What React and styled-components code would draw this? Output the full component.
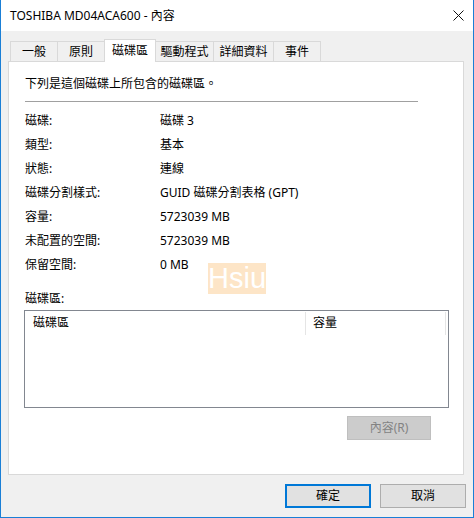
import React from "react";
import styled, { createGlobalStyle } from "styled-components";

const Global = createGlobalStyle`
  html, body { margin: 0; padding: 0; background: #ffffff; }
  body {
    font-family: "Noto Sans", "Noto Sans CJK TC", sans-serif;
    font-size: 12px;
    color: #000;
  }
  * { box-sizing: border-box; }
`;

const Window = styled.div`
  width: 474px;
  height: 518px;
  border: 1px solid #1a7fd6;
  border-top: none;
  display: flex;
  flex-direction: column;
  background: #f0f0f0;
`;

const TitleBar = styled.div`
  height: 31px;
  flex: none;
  background: #ffffff;
  display: flex;
  align-items: center;
  justify-content: space-between;
  padding: 0 9px 0 9px;
  font-size: 12px;
  line-height: 16px;
`;

const TitleText = styled.span`
  white-space: nowrap;
`;

const Body = styled.div`
  flex: 1;
  display: flex;
  flex-direction: column;
  padding: 8px 0 0 7px;
`;

const Tabs = styled.div`
  display: flex;
  align-items: flex-end;
  height: 22px;
  margin-left: 2px;
  position: relative;
  z-index: 1;
`;

const Tab = styled.div`
  width: ${(p) => p.$w}px;
  height: ${(p) => (p.$selected ? 23 : 20)}px;
  margin-bottom: ${(p) => (p.$selected ? -1 : 0)}px;
  margin-right: -1px;
  border: 1px solid #d9d9d9;
  border-bottom: none;
  background: ${(p) => (p.$selected ? "#ffffff" : "#f0f0f0")};
  position: relative;
  z-index: ${(p) => (p.$selected ? 2 : 1)};
  display: flex;
  align-items: center;
  justify-content: center;
  font-size: 12px;
  line-height: 16px;
  padding-top: ${(p) => (p.$selected ? 0 : 1)}px;
  white-space: nowrap;
`;

const Panel = styled.div`
  width: 456px;
  height: 414px;
  background: #ffffff;
  border: 1px solid #d9d9d9;
  padding: 14px 0 0 16px;
  display: flex;
  flex-direction: column;
`;

const Intro = styled.div`
  line-height: 16px;
`;

const Separator = styled.div`
  width: 393px;
  height: 1px;
  background: #a0a0a0;
  margin-top: 9px;
`;

const InfoGrid = styled.div`
  display: grid;
  grid-template-columns: 135px 1fr;
  grid-auto-rows: 24px;
  align-items: center;
  margin-top: 7px;
  line-height: 16px;
`;

const Label = styled.div`
  line-height: 16px;
  margin-top: 14px;
`;

const ListBox = styled.div`
  margin-top: 3px;
  margin-left: -1px;
  width: 425px;
  height: 98px;
  border: 1px solid #828790;
  background: #ffffff;
`;

const ListHeader = styled.div`
  display: flex;
  height: 24px;
`;

const HeaderCell = styled.div`
  width: ${(p) => p.$w}px;
  padding-left: ${(p) => p.$pad}px;
  display: flex;
  align-items: center;
  line-height: 16px;
  padding-bottom: 1px;
`;

const HeaderDivider = styled.div`
  width: 1px;
  margin-top: 1px;
  height: 23px;
  background: #e5e5e5;
`;

const ButtonRow = styled.div`
  display: flex;
  justify-content: flex-end;
  padding-right: ${(p) => p.$right}px;
  margin-top: ${(p) => p.$top}px;
  gap: 9px;
`;

const Button = styled.div`
  width: ${(p) => p.$w}px;
  height: 24px;
  display: flex;
  align-items: center;
  justify-content: center;
  font-size: 12px;
  line-height: 16px;
  background: ${(p) => (p.$disabled ? "#cccccc" : "#e1e1e1")};
  color: ${(p) => (p.$disabled ? "#838383" : "#000")};
  border: ${(p) =>
    p.$default
      ? "2px solid #0078d7"
      : p.$disabled
      ? "1px solid #bfbfbf"
      : "1px solid #adadad"};
`;

const Watermark = styled.div`
  position: absolute;
  left: 208px;
  top: 263px;
  width: 58px;
  height: 31px;
  background: #fde5c7;
  color: #ffffff;
  font-family: "Liberation Sans", Arial, sans-serif;
  font-size: 29px;
  line-height: 31px;
  text-align: center;
`;

const Root = styled.div`
  position: relative;
  width: 474px;
  height: 518px;
`;

const CloseIcon = () => (
  <svg width="11" height="11" viewBox="0 0 11 11">
    <path d="M0.5 0.5 L10.5 10.5 M10.5 0.5 L0.5 10.5" stroke="#111" strokeWidth="1" fill="none" />
  </svg>
);

const tabs = [
  { t: "一般", w: 48 },
  { t: "原則", w: 48 },
  { t: "磁碟區", w: 52, sel: true },
  { t: "驅動程式", w: 59 },
  { t: "詳細資料", w: 61 },
  { t: "事件", w: 48 },
];

const info = [
  ["磁碟:", "磁碟 3"],
  ["類型:", "基本"],
  ["狀態:", "連線"],
  ["磁碟分割樣式:", "GUID 磁碟分割表格 (GPT)"],
  ["容量:", "5723039 MB"],
  ["未配置的空間:", "5723039 MB"],
  ["保留空間:", "0 MB"],
];

export default function App() {
  return (
    <Root>
      <Global />
      <Window>
        <TitleBar>
          <TitleText>TOSHIBA MD04ACA600 - 內容</TitleText>
          <CloseIcon />
        </TitleBar>
        <Body>
          <Tabs>
            {tabs.map((tb) => (
              <Tab key={tb.t} $w={tb.w} $selected={tb.sel}>
                {tb.t}
              </Tab>
            ))}
          </Tabs>
          <Panel>
            <Intro>下列是這個磁碟上所包含的磁碟區。</Intro>
            <Separator />
            <InfoGrid>
              {info.map(([k, v]) => (
                <React.Fragment key={k}>
                  <div>{k}</div>
                  <div>{v}</div>
                </React.Fragment>
              ))}
            </InfoGrid>
            <Label>磁碟區:</Label>
            <ListBox>
              <ListHeader>
                <HeaderCell $w={280} $pad={8}>磁碟區</HeaderCell>
                <HeaderDivider />
                <HeaderCell $w={139} $pad={7}>容量</HeaderCell>
                <HeaderDivider />
              </ListHeader>
            </ListBox>
            <ButtonRow $right={32} $top={8}>
              <Button $w={84} $disabled>內容(R)</Button>
            </ButtonRow>
          </Panel>
          <ButtonRow $right={7} $top={9}>
            <Button $w={86} $default>確定</Button>
            <Button $w={86}>取消</Button>
          </ButtonRow>
        </Body>
      </Window>
      <Watermark>Hsiu</Watermark>
    </Root>
  );
}
